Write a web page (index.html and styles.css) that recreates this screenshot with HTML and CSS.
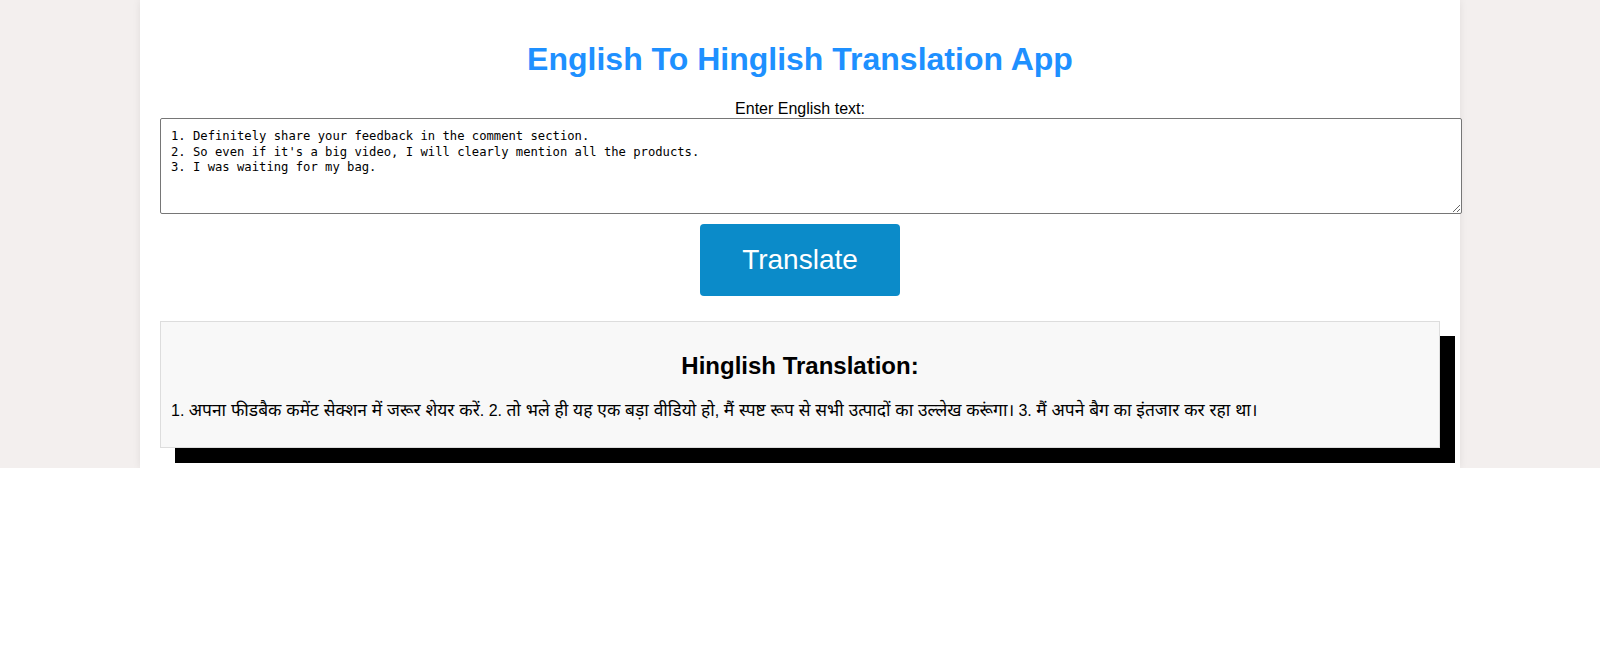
FILE: index.html
```html
<!DOCTYPE html>
<html lang="en">
<head>
<meta charset="utf-8">
<title>English To Hinglish Translation App</title>
<link rel="stylesheet" href="styles.css">
</head>
<body>
<div class="container">
  <h1 class="title">English To Hinglish Translation App</h1>
  <label class="label" for="english">Enter English text:</label>
  <textarea id="english" class="input">
1. Definitely share your feedback in the comment section.
2. So even if it's a big video, I will clearly mention all the products.
3. I was waiting for my bag.</textarea>
  <button class="btn" type="button">Translate</button>
  <div class="result">
    <h2 class="result-title">Hinglish Translation:</h2>
    <p class="result-text">1. <span class="deva">अपना फीडबैक कमेंट सेक्शन में जरूर शेयर करें</span>. 2. <span class="deva">तो भले ही यह एक बड़ा वीडियो हो</span>, <span class="deva">मैं स्पष्ट रूप से सभी उत्पादों का उल्लेख करूंगा।</span> 3. <span class="deva">मैं अपने बैग का इंतजार कर रहा था।</span></p>
  </div>
</div>
</body>
</html>
```

FILE: styles.css
```css
html {
  background: #ffffff;
}

body {
  margin: 0;
  background: #f3efee;
  font-family: "Liberation Sans", Arial, "Noto Sans Devanagari", "Lohit Devanagari", FreeSans, sans-serif;
  color: #000;
}

.container {
  width: 1280px;
  margin: 0 auto;
  padding: 20px;
  background: #ffffff;
  box-shadow: 0 0 8px rgba(0, 0, 0, 0.08);
  text-align: center;
}

.title {
  font-size: 32px;
  font-weight: bold;
  color: #1e90ff;
  margin: 21.44px 0;
}

.label {
  display: block;
  font-size: 16px;
  line-height: 18.4px;
}

.input {
  display: block;
  width: 1280px;
  height: 74px;
  margin: 0;
  padding: 10px;
  border: 1px solid #767676;
  border-radius: 2px;
  font-family: "DejaVu Sans Mono", "Liberation Mono", monospace;
  font-size: 12.2px;
  line-height: 15.6px;
  color: #000;
  text-align: left;
  background: #fff;
}

.btn {
  display: block;
  width: 200px;
  height: 72px;
  margin: 10px auto 0;
  border: none;
  border-radius: 4px;
  background: #0b8bc9;
  color: #ffffff;
  font-family: "Liberation Sans", Arial, sans-serif;
  font-size: 28px;
  cursor: pointer;
}

.result {
  margin-top: 25px;
  padding: 10px;
  border: 1px solid #dddddd;
  background: #f8f8f8;
  box-shadow: 15px 15px 0 #000;
}

.result-title {
  font-size: 24px;
  font-weight: bold;
  margin: 19.92px 0;
}

.result-text {
  font-size: 16px;
  line-height: 20px;
  text-align: left;
  margin: 16px 0;
}

.deva {
  font-size: 17.4px;
}
```
